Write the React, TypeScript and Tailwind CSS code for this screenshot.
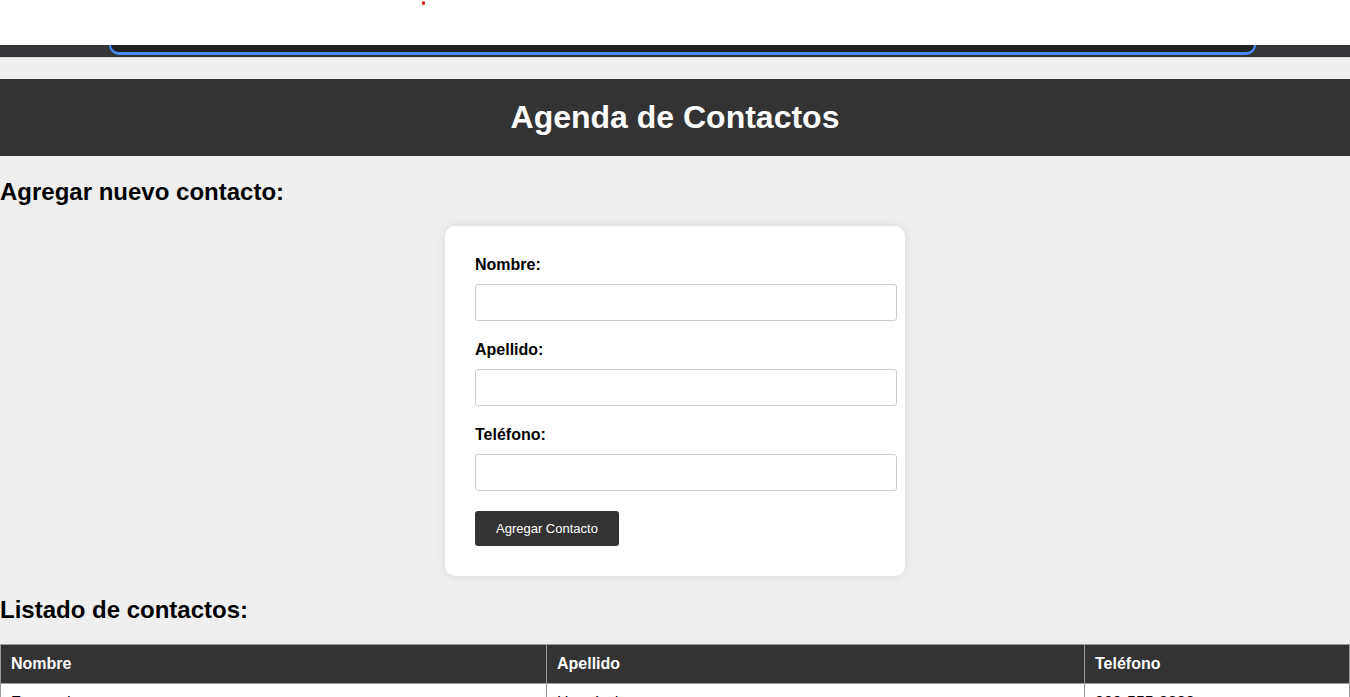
export default function App() {
  const contactos = [
    { nombre: "Fernando", apellido: "Hernández", telefono: "999-555-8888" },
  ]

  return (
    <div className="min-h-screen bg-[#efefef] font-['Liberation_Sans',Arial,sans-serif] text-black">
      {/* browser overlay strip */}
      <div className="relative h-[45px] bg-white">
        <div className="absolute left-[422px] top-[1px] h-[4px] w-[3px] rounded-full bg-[#e51b1b]" />
      </div>
      <div className="h-[12px] bg-[#35363a] pr-[94px] pl-[109px]">
        <div className="h-[10px] rounded-b-[14px] border-x-2 border-b-[3px] border-[#4c8bf5] bg-[#202124]" />
      </div>
      <div className="h-[22px] border-t border-[#d9d9d9]" />

      <header className="bg-[#333] py-5 text-center text-white">
        <h1 className="text-[32px] font-bold leading-[37px]">Agenda de Contactos</h1>
      </header>

      <h2 className="mt-[22px] mb-5 text-2xl leading-7 font-bold">Agregar nuevo contacto:</h2>

      <form
        className="mx-auto w-[460px] rounded-[10px] bg-white p-[30px] shadow-[0_0_10px_rgba(0,0,0,0.1)]"
        onSubmit={(e) => e.preventDefault()}
      >
        {["Nombre:", "Apellido:", "Teléfono:"].map((label) => (
          <div key={label} className="mb-5">
            <label className="mb-[10px] block text-base leading-[18px] font-bold">{label}</label>
            <input
              type="text"
              className="box-content block h-[15px] w-full rounded-[3px] border border-[#ccc] bg-white px-[10px] py-[10px] text-[13px] outline-none"
            />
          </div>
        ))}
        <button
          type="submit"
          className="rounded-[3px] bg-[#333] px-[21px] py-[10px] text-[13px] leading-[15px] text-white"
        >
          Agregar Contacto
        </button>
      </form>

      <h2 className="my-5 text-2xl leading-7 font-bold">Listado de contactos:</h2>

      <table className="w-full border-collapse border border-[#999] bg-white text-left text-base">
        <thead>
          <tr className="bg-[#333] text-white">
            <th className="w-[546px] border border-[#999] px-[10px] py-[10px] leading-[18px] font-bold">Nombre</th>
            <th className="w-[538px] border border-[#999] px-[10px] py-[10px] leading-[18px] font-bold">Apellido</th>
            <th className="border border-[#999] px-[10px] py-[10px] leading-[18px] font-bold">Teléfono</th>
          </tr>
        </thead>
        <tbody>
          {contactos.map((c) => (
            <tr key={c.telefono}>
              <td className="border border-[#999] px-[10px] py-[10px] leading-[18px]">{c.nombre}</td>
              <td className="border border-[#999] px-[10px] py-[10px] leading-[18px]">{c.apellido}</td>
              <td className="border border-[#999] px-[10px] py-[10px] leading-[18px]">{c.telefono}</td>
            </tr>
          ))}
        </tbody>
      </table>
    </div>
  )
}
